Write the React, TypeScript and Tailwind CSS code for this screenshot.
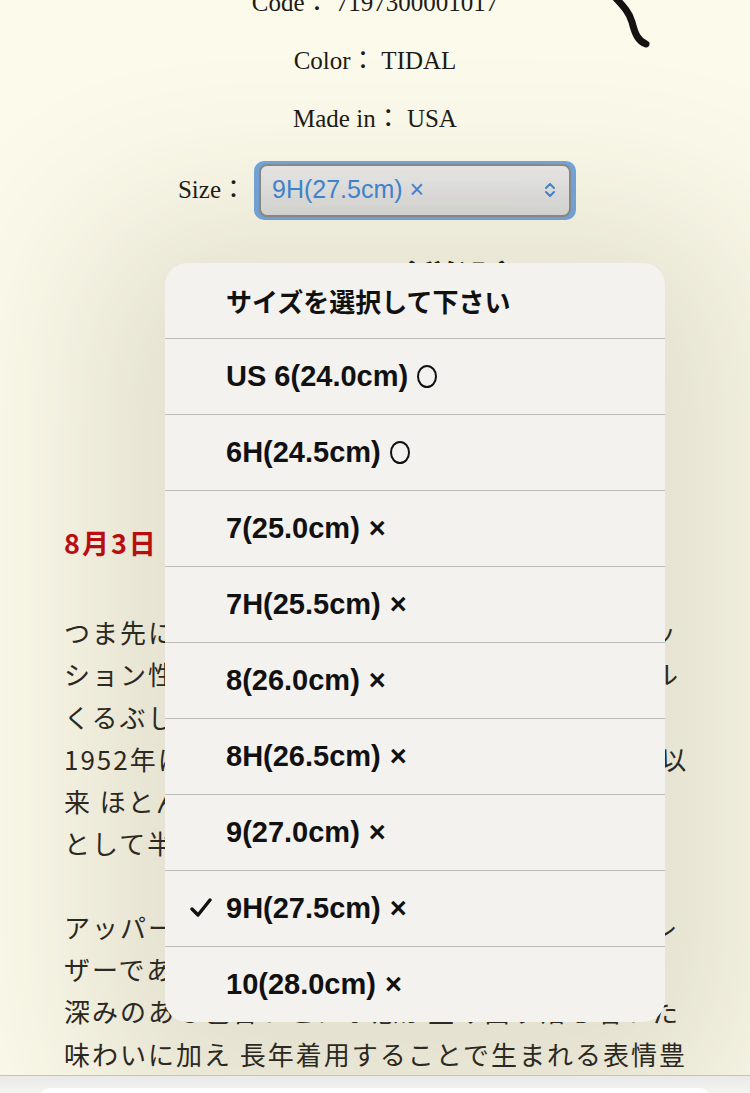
import type React from "react";

type SizeOption = {
  label: string;
  mark: string;
  selected?: boolean;
};

const sizes: SizeOption[] = [
  { label: "US 6(24.0cm)", mark: "○" },
  { label: "6H(24.5cm)", mark: "○" },
  { label: "7(25.0cm)", mark: "×" },
  { label: "7H(25.5cm)", mark: "×" },
  { label: "8(26.0cm)", mark: "×" },
  { label: "8H(26.5cm)", mark: "×" },
  { label: "9(27.0cm)", mark: "×" },
  { label: "9H(27.5cm)", mark: "×", selected: true },
  { label: "10(28.0cm)", mark: "×" },
];

const serif: React.CSSProperties = {
  fontFamily: '"Liberation Serif", "Noto Sans CJK JP", serif',
};

const jp: React.CSSProperties = {
  fontFamily: '"Noto Sans CJK JP", sans-serif',
};

const ui: React.CSSProperties = {
  fontFamily: '"Liberation Sans", "Noto Sans CJK JP", sans-serif',
};

const paragraphs: string[][] = [
  [
    "つま先にかけてシャープになるフォルムでファッ",
    "ション性と機能性を兼ね備えたローカットモデル",
    "くるぶし丈で合わせやすい一足です。",
    "1952年に米国の郵便局員の制靴として誕生して以",
    "来 ほとんど変わらないデザインを持つモデル",
    "として半世紀以上愛され続けています。",
  ],
  [
    "アッパーには独自の鞣しによる上質なオイルドレ",
    "ザーであるフェザーストーンレザーを採用し、",
    "深みのある色合いとシボ感が生み出す落ち着いた",
    "味わいに加え 長年着用することで生まれる表情豊",
  ],
];

function Chevrons() {
  return (
    <svg width="14" height="20" viewBox="0 0 14 20" fill="none">
      <path
        d="M3 8 L7 4 L11 8"
        stroke="#3f87d6"
        strokeWidth="2"
        strokeLinecap="round"
        strokeLinejoin="round"
      />
      <path
        d="M3 12 L7 16 L11 12"
        stroke="#3f87d6"
        strokeWidth="2"
        strokeLinecap="round"
        strokeLinejoin="round"
      />
    </svg>
  );
}

function Check() {
  return (
    <svg width="22" height="20" viewBox="0 0 22 20" fill="none">
      <path
        d="M2 11 L8 17 L20 2"
        stroke="#111"
        strokeWidth="3.4"
        strokeLinecap="round"
        strokeLinejoin="round"
      />
    </svg>
  );
}

export default function App() {
  return (
    <div className="relative h-[1093px] w-[750px] overflow-hidden bg-[#fcfaeb]">
      {/* hand drawn line from product image */}
      <svg
        className="pointer-events-none absolute left-0 top-0"
        width="750"
        height="60"
        viewBox="0 0 750 60"
        fill="none"
      >
        <path
          d="M612 -6 C621 4 629 11 632 22 C635 34 638 41 646 44"
          stroke="#141210"
          strokeWidth="7"
          strokeLinecap="round"
        />
      </svg>

      <div
        className="-mt-[26px] flex flex-col items-center text-[25px] text-[#1d1b18]"
        style={serif}
      >
        <div className="flex h-[58px] items-center">Code： 7197300001017</div>
        <div className="flex h-[58px] items-center">Color： TIDAL</div>
        <div className="flex h-[58px] items-center">Made in： USA</div>
        <div className="mt-[13px] flex h-[58px] items-center gap-[8px] pl-[4px]">
          <span>Size：</span>
          <div className="rounded-[10px] bg-[#74a7de] px-[5px] py-[3px]">
            <div
              className="flex h-[53px] w-[312px] items-center justify-between rounded-[8px] border-2 border-[#8c8c8c] bg-gradient-to-b from-[#ebebeb] to-[#dcdcdc] pl-[11px] pr-[12px] text-[25px] text-[#3f87d6]"
              style={ui}
            >
              <span>9H(27.5cm) ×</span>
              <Chevrons />
            </div>
          </div>
        </div>
      </div>

      <div
        className="mt-[35px] text-center text-[40px] font-bold leading-[48px] text-[#1d1b18]"
        style={jp}
      >
        ¥ 39,600（税込）
      </div>

      <div className="px-[64px]" style={jp}>
        <p className="mt-[220px] text-[27px] font-bold leading-[42px] tracking-[2px] text-[#c4090f]">
          8月3日
        </p>
        <div className="mt-[47px] flex flex-col gap-[41px] text-[26px] leading-[42.3px] tracking-[2px] text-[#2a2723]">
          {paragraphs.map((lines, i) => (
            <div key={i}>
              {lines.map((line) => (
                <div key={line} className="whitespace-nowrap">
                  {line}
                </div>
              ))}
            </div>
          ))}
        </div>
      </div>

      {/* native select menu */}
      <div
        className="absolute left-[165px] top-[263px] w-[500px] overflow-hidden rounded-[22px] bg-[#f3f2ee] text-[29px] font-bold text-[#111] shadow-[0_30px_170px_80px_rgba(70,65,30,0.14)]"
        style={ui}
      >
        <div className="flex h-[75px] items-center pl-[61px]">
          <span style={jp} className="text-[26px]">
            サイズを選択して下さい
          </span>
        </div>
        {sizes.map((s) => (
          <div
            key={s.label}
            className="relative flex h-[76px] items-center gap-[9px] border-t border-[#bcbbb7] pl-[61px]"
          >
            {s.selected && (
              <span className="absolute left-[25px] top-[27px]">
                <Check />
              </span>
            )}
            <span>{s.label}</span>
            {s.mark === "○" ? (
              <span className="inline-block h-[23px] w-[20px] rounded-[50%] border-[2.5px] border-[#111]" />
            ) : (
              <span>{s.mark}</span>
            )}
          </div>
        ))}
      </div>

      {/* browser toolbar */}
      <div className="absolute left-0 top-[1075px] h-[18px] w-full border-t border-[#c3c3c0] bg-gradient-to-b from-[#e9e9e7] to-[#f4f4f3]">
        <div className="mx-[40px] mt-[12px] h-[10px] rounded-t-[12px] bg-white" />
      </div>
    </div>
  );
}
